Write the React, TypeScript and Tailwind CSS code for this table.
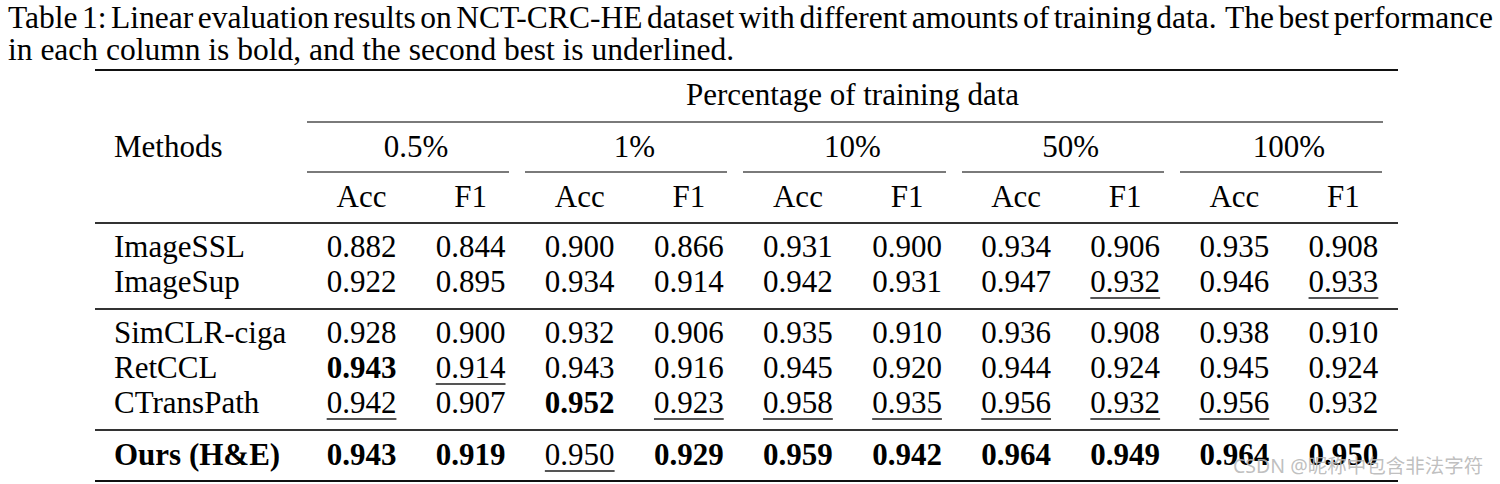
type Cell = { v: string; b?: boolean; u?: boolean };

const groups = ["0.5%", "1%", "10%", "50%", "100%"];

const c = (s: string): Cell => {
  // "*" prefix = bold, "_" prefix = underlined
  if (s.startsWith("*")) return { v: s.slice(1), b: true };
  if (s.startsWith("_")) return { v: s.slice(1), u: true };
  return { v: s };
};

const block1 = [
  { name: "ImageSSL", vals: "0.882 0.844 0.900 0.866 0.931 0.900 0.934 0.906 0.935 0.908" },
  { name: "ImageSup", vals: "0.922 0.895 0.934 0.914 0.942 0.931 0.947 _0.932 0.946 _0.933" },
];

const block2 = [
  { name: "SimCLR-ciga", vals: "0.928 0.900 0.932 0.906 0.935 0.910 0.936 0.908 0.938 0.910" },
  { name: "RetCCL", vals: "*0.943 _0.914 0.943 0.916 0.945 0.920 0.944 0.924 0.945 0.924" },
  { name: "CTransPath", vals: "_0.942 0.907 *0.952 _0.923 _0.958 _0.935 _0.956 _0.932 _0.956 0.932" },
];

const ours = { name: "Ours (H&E)", vals: "*0.943 *0.919 _0.950 *0.929 *0.959 *0.942 *0.964 *0.949 *0.964 *0.950" };

const grid = "grid grid-cols-[212px_repeat(10,minmax(0,1fr))]";

const DataRow = ({ name, vals, bold }: { name: string; vals: string; bold?: boolean }) => (
  <div className={`${grid} leading-[35px]`}>
    <div className={`pl-[19px] ${bold ? "font-bold" : ""}`}>{name}</div>
    {vals.split(" ").map(c).map((cell, i) => (
      <div key={i} className="text-center">
        <span
          className={`${cell.b ? "font-bold" : ""} ${
            cell.u ? "underline decoration-[#555] decoration-[1.5px] underline-offset-[5px]" : ""
          }`}
        >
          {cell.v}
        </span>
      </div>
    ))}
  </div>
);

export default function App() {
  return (
    <div className="relative w-[1500px] h-[484px] overflow-hidden bg-white text-black font-['Liberation_Serif',serif]">
      <div className="pl-[8px] pt-[2px] text-[31.5px] leading-[32px] whitespace-nowrap">
        <p className="w-[1485px] text-justify [text-align-last:justify] [word-spacing:-4.5px]">
          Table 1: Linear evaluation results on NCT-CRC-HE dataset with different amounts of training data.&nbsp; The best performance
        </p>
        <p>in each column is bold, and the second best is underlined.</p>
      </div>

      <div className="ml-[95px] w-[1303px] text-[31px]">
        <div className="mt-[3px] h-[2px] bg-[#111]" />

        <div className={`${grid} mt-[6px] leading-[35px]`}>
          <div />
          <div className="col-span-10 text-center">Percentage of training data</div>
        </div>

        <div className={`${grid} mt-[9px]`}>
          <div />
          <div className="col-span-10 mr-[15px] h-[2px] bg-[#7a7a7a]" />
        </div>

        <div className={`${grid} mt-[6px] leading-[35px]`}>
          <div className="pl-[19px]">Methods</div>
          {groups.map((g) => (
            <div key={g} className="col-span-2 text-center">
              {g}
            </div>
          ))}
        </div>

        <div className={`${grid} mt-[7px]`}>
          <div />
          {groups.map((g) => (
            <div key={g} className="col-span-2 mr-[16px] h-[2px] bg-[#7a7a7a]" />
          ))}
        </div>

        <div className={`${grid} mt-[6px] leading-[35px]`}>
          <div />
          {groups.map((g) => (
            <div key={g} className="col-span-2 grid grid-cols-2 text-center">
              <div>Acc</div>
              <div>F1</div>
            </div>
          ))}
        </div>

        <div className="mt-[8px] h-[2px] bg-[#333]" />
        <div className="mt-[5px]">
          {block1.map((r) => (
            <DataRow key={r.name} {...r} />
          ))}
        </div>

        <div className="mt-[9px] h-[2px] bg-[#333]" />
        <div className="mt-[5px]">
          {block2.map((r) => (
            <DataRow key={r.name} {...r} />
          ))}
        </div>

        <div className="mt-[9px] h-[2px] bg-[#333]" />
        <div className="mt-[6px]">
          <DataRow {...ours} bold />
        </div>

        <div className="mt-[8px] h-[2px] bg-[#111]" />
      </div>

      <div className="absolute left-[1233px] top-[453px] text-[19.5px] leading-[26px] text-[#b8b8b8]/90 font-['Noto_Sans','Noto_Sans_CJK_SC',sans-serif] whitespace-nowrap">
        CSDN @昵称中包含非法字符
      </div>
    </div>
  );
}
